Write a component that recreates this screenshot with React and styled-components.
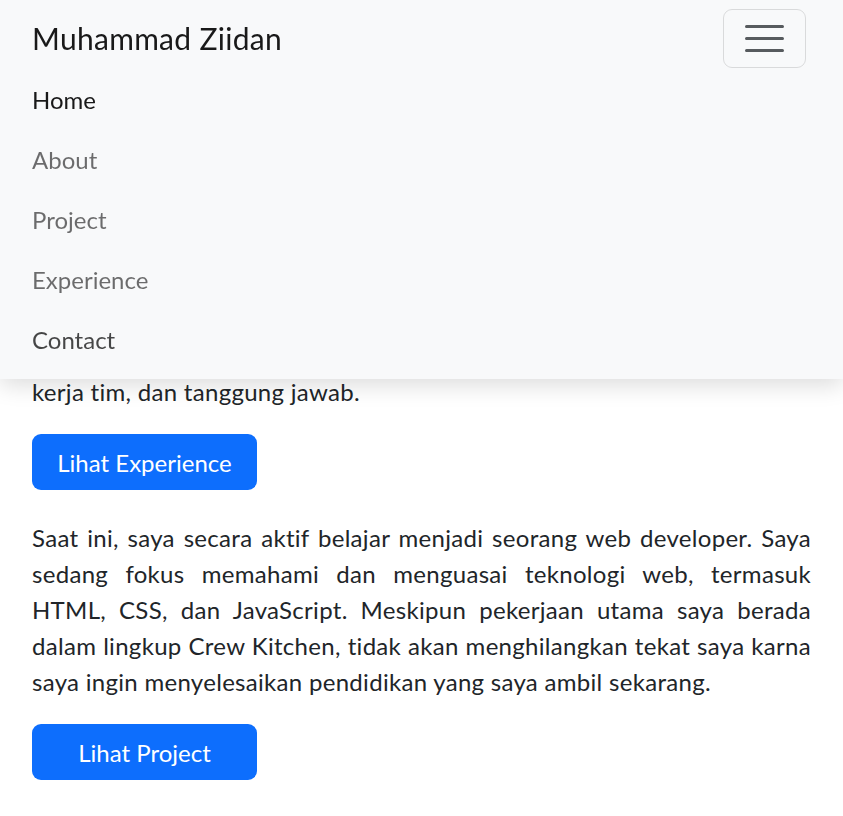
import React from "react";
import styled, { createGlobalStyle } from "styled-components";

const links = [
  { label: "Home", tone: "active" },
  { label: "About", tone: "muted" },
  { label: "Project", tone: "muted" },
  { label: "Experience", tone: "muted" },
  { label: "Contact", tone: "hover" },
];

const App = () => {
  return (
    <>
      <GlobalStyle />
      <Navbar>
        <NavTop>
          <Brand href="#">Muhammad Ziidan</Brand>
          <Toggler aria-label="Toggle navigation">
            <svg width="45" height="45" viewBox="0 0 30 30">
              <path
                d="M3 7h24M3 15h24M3 23h24"
                stroke="rgba(33,37,41,0.75)"
                strokeWidth="2"
                strokeLinecap="round"
              />
            </svg>
          </Toggler>
        </NavTop>
        <NavList>
          {links.map((l) => (
            <NavLink key={l.label} href="#" $tone={l.tone}>
              {l.label}
            </NavLink>
          ))}
        </NavList>
      </Navbar>
      <Main>
        <Text>
          Saya bekerja sebagai Crew Kitchen,
          <br />
          tempat saya belajar disiplin, ketelitian,
          <br />
          komunikasi, manajemen waktu,
          <br />
          kerja tim, dan tanggung jawab.
        </Text>
        <Button>Lihat Experience</Button>
        <Text $gapTop>
          Saat ini, saya secara aktif belajar menjadi seorang web developer. Saya
          sedang fokus memahami dan menguasai teknologi web, termasuk HTML, CSS,
          dan JavaScript. Meskipun pekerjaan utama saya berada dalam lingkup Crew
          Kitchen, tidak akan menghilangkan tekat saya karna saya ingin
          menyelesaikan pendidikan yang saya ambil sekarang.
        </Text>
        <Button>Lihat Project</Button>
      </Main>
    </>
  );
};

const GlobalStyle = createGlobalStyle`
  body {
    margin: 0;
    background: #fff;
    color: #212529;
    font-family: Lato, "Noto Sans", sans-serif;
    font-size: 24px;
    line-height: 36px;
  }
`;

const Navbar = styled.nav`
  position: fixed;
  top: 0;
  left: 0;
  right: 0;
  z-index: 10;
  background-color: #f8f9fa;
  padding: 9px 37px 9px 32px;
  box-shadow: 0 6px 22px rgba(0, 0, 0, 0.14);
`;

const NavTop = styled.div`
  display: flex;
  justify-content: space-between;
  align-items: center;
  height: 59px;
`;

const Brand = styled.a`
  font-size: 30px;
  line-height: 45px;
  letter-spacing: 0.3px;
  color: rgba(0, 0, 0, 0.9);
  text-decoration: none;
`;

const Toggler = styled.button`
  width: 83px;
  height: 59px;
  padding: 0;
  display: flex;
  align-items: center;
  justify-content: center;
  background: transparent;
  border: 1px solid rgba(0, 0, 0, 0.12);
  border-radius: 9px;
  cursor: pointer;
`;

const NavList = styled.div`
  display: flex;
  flex-direction: column;
  margin-top: 2px;
`;

const toneColor = {
  active: "rgba(0, 0, 0, 0.9)",
  muted: "rgba(0, 0, 0, 0.57)",
  hover: "rgba(0, 0, 0, 0.72)",
};

const NavLink = styled.a`
  display: block;
  padding: 12px 0;
  line-height: 36px;
  font-size: 24px;
  color: ${(p) => toneColor[p.$tone]};
  text-decoration: none;
`;

const Main = styled.main`
  padding: 266px 32px 40px;
`;

const Text = styled.p`
  margin: ${(p) => (p.$gapTop ? "30px" : "0")} 0 24px;
  text-align: justify;
  letter-spacing: 0.3px;
`;

const Button = styled.button`
  display: block;
  width: 225px;
  height: 56px;
  padding: 0;
  border: none;
  border-radius: 9px;
  background-color: #0d6efd;
  color: #fff;
  font-family: inherit;
  font-size: 24px;
  cursor: pointer;
  &:hover {
    background-color: #0b5ed7;
  }
`;

export default App;
